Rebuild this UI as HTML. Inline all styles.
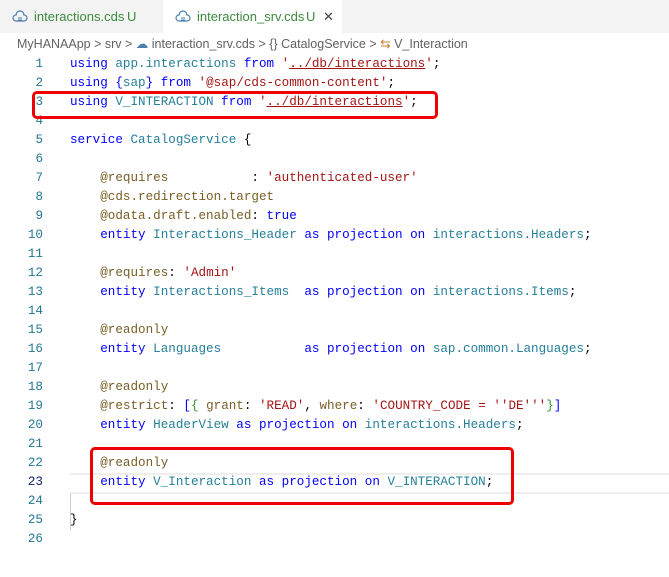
<!DOCTYPE html>
<html><head><style>
body{margin:0;width:669px;height:577px;background:#fff;overflow:hidden;position:relative;font-family:"Liberation Sans",sans-serif}
.tabs{position:absolute;left:0;top:0;width:669px;height:33px;background:#f3f3f3}
.tab{position:absolute;top:0;height:33px;font-size:13px;line-height:33px;color:#3b8a3b}
.tab svg{position:absolute;left:12px;top:10px}
.bc{position:absolute;top:36px;left:17px;font-size:12.5px;color:#616161;white-space:nowrap}
.code{position:absolute;left:0;top:55px;width:669px;font-family:"Liberation Mono",monospace;font-size:12.6px}
.l{height:19px;line-height:19px;white-space:pre;position:relative}
.n{position:absolute;left:0;width:43px;color:#237893;text-align:right}
.t{position:absolute;left:70px}
.k{color:#0000ff}.s{color:#a31515}.i{color:#267f99}.a{color:#795e26}.v{color:#001080}
.u{text-decoration:underline;text-decoration-color:#a31515}
.box{position:absolute;border:3px solid #e00;border-radius:5px}
</style></head><body>
<div class="tabs">
 <div class="tab" style="left:0;width:163px"><svg width="16" height="14" viewBox="0 0 16 14"><path d="M4 11a3 3 0 0 1 0-6 4 4 0 0 1 8 0 3 3 0 0 1 0 6z" fill="none" stroke="#4a7fb0" stroke-width="1.2"/><path d="M6 8h4M6 10h4" stroke="#4a7fb0"/></svg><span style="position:absolute;left:34px">interactions.cds</span><span style="position:absolute;left:127px">U</span></div>
 <div class="tab" style="left:163px;width:179px;background:#fff"><svg width="16" height="14" viewBox="0 0 16 14"><path d="M4 11a3 3 0 0 1 0-6 4 4 0 0 1 8 0 3 3 0 0 1 0 6z" fill="none" stroke="#4a7fb0" stroke-width="1.2"/><path d="M6 8h4M6 10h4" stroke="#4a7fb0"/></svg><span style="position:absolute;left:34px">interaction_srv.cds</span><span style="position:absolute;left:143px">U</span><span style="position:absolute;left:160px;color:#444">✕</span></div>
</div>
<div class="bc">MyHANAApp &gt; srv &gt; <span style="color:#4a7fb0">☁</span> interaction_srv.cds &gt; {} CatalogService &gt; <span style="color:#c87d2e">⇆</span> V_Interaction</div>
<div style="position:absolute;left:70px;top:492px;width:1px;height:38px;background:#ccc"></div>
<div style="position:absolute;left:70px;top:473px;width:599px;height:17px;border-top:2px solid #eee;border-bottom:2px solid #eee"></div>
<div class="code">
<div class="l"><span class="n">1</span><span class="t"><span class="k">using</span> <span class="i">app.interactions</span> <span class="k">from</span> <span class="s">'<span class="u">../db/interactions</span>'</span>;</span></div>
<div class="l"><span class="n">2</span><span class="t"><span class="k">using</span> <span class="k">{</span><span class="i">sap</span><span class="k">}</span> <span class="k">from</span> <span class="s">'@sap/cds-common-content'</span>;</span></div>
<div class="l"><span class="n">3</span><span class="t"><span class="k">using</span> <span class="i">V_INTERACTION</span> <span class="k">from</span> <span class="s">'<span class="u">../db/interactions</span>'</span>;</span></div>
<div class="l"><span class="n">4</span></div>
<div class="l"><span class="n">5</span><span class="t"><span class="k">service</span> <span class="i">CatalogService</span> {</span></div>
<div class="l"><span class="n">6</span></div>
<div class="l"><span class="n">7</span><span class="t">    <span class="a">@requires</span>           : <span class="s">'authenticated-user'</span></span></div>
<div class="l"><span class="n">8</span><span class="t">    <span class="a">@cds.redirection.target</span></span></div>
<div class="l"><span class="n">9</span><span class="t">    <span class="a">@odata.draft.enabled</span>: <span class="k">true</span></span></div>
<div class="l"><span class="n">10</span><span class="t">    <span class="k">entity</span> <span class="i">Interactions_Header</span> <span class="k">as projection on</span> <span class="i">interactions.Headers</span>;</span></div>
<div class="l"><span class="n">11</span></div>
<div class="l"><span class="n">12</span><span class="t">    <span class="a">@requires</span>: <span class="s">'Admin'</span></span></div>
<div class="l"><span class="n">13</span><span class="t">    <span class="k">entity</span> <span class="i">Interactions_Items</span>  <span class="k">as projection on</span> <span class="i">interactions.Items</span>;</span></div>
<div class="l"><span class="n">14</span></div>
<div class="l"><span class="n">15</span><span class="t">    <span class="a">@readonly</span></span></div>
<div class="l"><span class="n">16</span><span class="t">    <span class="k">entity</span> <span class="i">Languages</span>           <span class="k">as projection on</span> <span class="i">sap.common.Languages</span>;</span></div>
<div class="l"><span class="n">17</span></div>
<div class="l"><span class="n">18</span><span class="t">    <span class="a">@readonly</span></span></div>
<div class="l"><span class="n">19</span><span class="t">    <span class="a">@restrict</span>: <span class="k">[</span><span style="color:#319331">{</span> <span class="a">grant</span>: <span class="s">'READ'</span>, <span class="a">where</span>: <span class="s">'COUNTRY_CODE = ''DE'''</span><span style="color:#319331">}</span><span class="k">]</span></span></div>
<div class="l"><span class="n">20</span><span class="t">    <span class="k">entity</span> <span class="i">HeaderView</span> <span class="k">as projection on</span> <span class="i">interactions.Headers</span>;</span></div>
<div class="l"><span class="n">21</span></div>
<div class="l"><span class="n">22</span><span class="t">    <span class="a">@readonly</span></span></div>
<div class="l"><span class="n" style="color:#0b216f">23</span><span class="t">    <span class="k">entity</span> <span class="i">V_Interaction</span> <span class="k">as projection on</span> <span class="i">V_INTERACTION</span>;</span></div>
<div class="l"><span class="n">24</span></div>
<div class="l"><span class="n">25</span><span class="t">}</span></div>
<div class="l"><span class="n">26</span></div>
</div>
<div class="box" style="left:32px;top:91px;width:400px;height:22px"></div>
<div class="box" style="left:90px;top:447px;width:418px;height:52px"></div>
</body></html>
